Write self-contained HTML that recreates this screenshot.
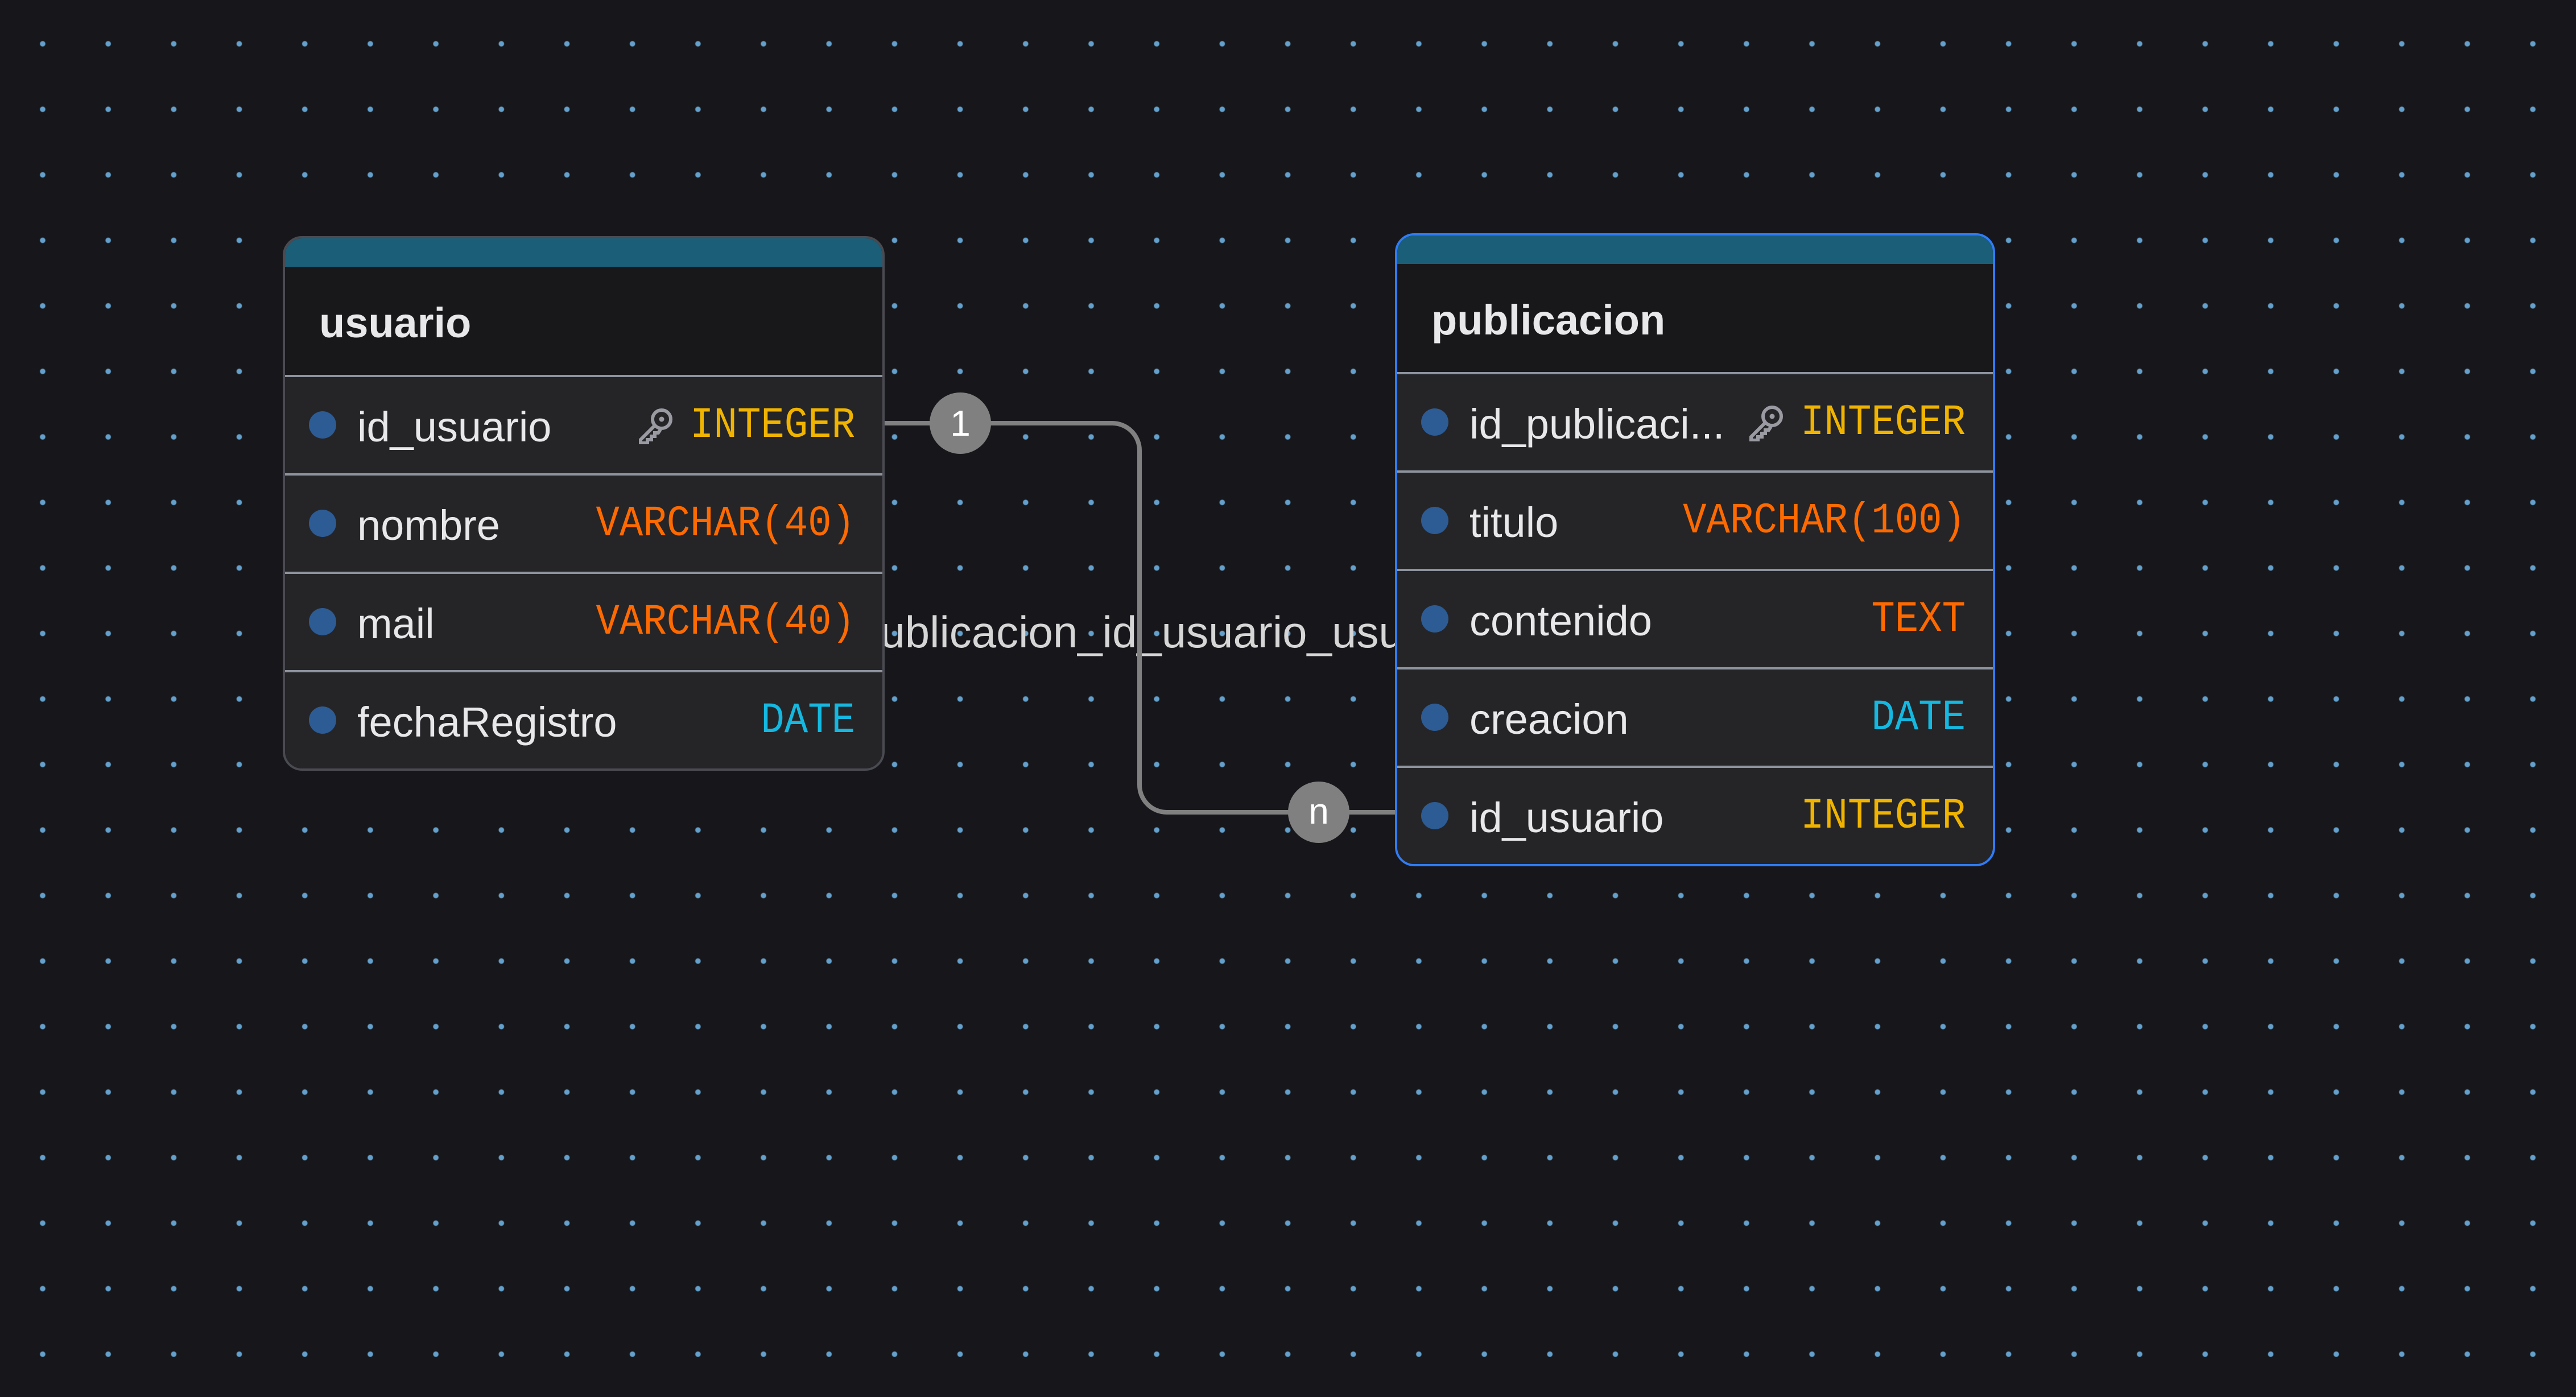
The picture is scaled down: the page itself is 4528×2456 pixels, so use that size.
<!DOCTYPE html>
<html><head><meta charset="utf-8"><style>
*{margin:0;padding:0;box-sizing:border-box}
html,body{width:4528px;height:2456px;overflow:hidden}
body{background-color:#17171b;background-image:radial-gradient(circle at 57.6px 57.6px,#64a0cc 0,#64a0cc 4px,rgba(100,160,204,0) 5.5px);background-size:115.2px 115.2px;background-position:17.4px 19.4px;font-family:"Liberation Sans",sans-serif;position:relative}
.t{position:absolute;border:4px solid #4a4a52;border-radius:34px;overflow:hidden;background:#252528}
.t.sel{border-color:#2f7cf6}
.hb{height:50px;background:#1a5e78}
.ti{height:190px;background:#18181b;color:#e8e8ea;font-weight:bold;font-size:74px;line-height:198px;padding-left:60px}
.r{height:173px;border-top:4px solid #8e949e;position:relative;background:#252528}
.dot{position:absolute;left:42px;top:60px;width:48px;height:48px;border-radius:50%;background:#2d5b94}
.n{position:absolute;left:127px;top:5px;line-height:166px;font-size:74px;color:#e8e8ea}
.ty{position:absolute;right:48px;top:2px;line-height:166px;font-family:"Liberation Mono",monospace;font-size:69px;transform:scaleY(1.1);transform-origin:right center}
.k{position:absolute;right:368px;top:54px;width:60px;height:64px}
.y{color:#f0b400}.o{color:#ff6a00}.c{color:#14b8e0}
.lbl{position:absolute;left:1504px;top:1066px;font-size:78px;color:#d6d6d6;white-space:nowrap}
</style></head><body>
<div class="lbl">publicacion_id_usuario_usuario</div>
<svg style="position:absolute;left:0;top:0" width="4528" height="2456">
<path d="M1551 744 H1955 A48 48 0 0 1 2003 792 V1380 A48 48 0 0 0 2051 1428 H2455" fill="none" stroke="#808080" stroke-width="8"/>
<circle cx="1688" cy="744" r="54" fill="#808080"/>
<text x="1688" y="766" font-family="Liberation Sans" font-size="64" fill="#fff" text-anchor="middle">1</text>
<circle cx="2318" cy="1428" r="54" fill="#808080"/>
<text x="2318" y="1448" font-family="Liberation Sans" font-size="64" fill="#fff" text-anchor="middle">n</text>
</svg>

<div class="t" style="left:497px;top:415px;width:1058px;height:940px">
<div class="hb"></div>
<div class="ti">usuario</div>
<div class="r"><div class="dot"></div><div class="n">id_usuario</div>
<svg class="k" viewBox="0 0 60 64"><circle cx="40" cy="20" r="16" fill="none" stroke="#9a9aa2" stroke-width="6"/><circle cx="40" cy="20" r="4.5" fill="#9a9aa2"/><path d="M28 31 L3 56 V62 H15 V56 H22 V50 H28 V44 H34 L38 38" fill="none" stroke="#9a9aa2" stroke-width="6" stroke-linejoin="miter"/></svg>
<div class="ty y">INTEGER</div></div>
<div class="r"><div class="dot"></div><div class="n">nombre</div><div class="ty o">VARCHAR(40)</div></div>
<div class="r"><div class="dot"></div><div class="n">mail</div><div class="ty o">VARCHAR(40)</div></div>
<div class="r"><div class="dot"></div><div class="n">fechaRegistro</div><div class="ty c">DATE</div></div>
</div>

<div class="t sel" style="left:2452px;top:410px;width:1055px;height:1113px">
<div class="hb"></div>
<div class="ti">publicacion</div>
<div class="r"><div class="dot"></div><div class="n">id_publicaci...</div>
<svg class="k" viewBox="0 0 60 64"><circle cx="40" cy="20" r="16" fill="none" stroke="#9a9aa2" stroke-width="6"/><circle cx="40" cy="20" r="4.5" fill="#9a9aa2"/><path d="M28 31 L3 56 V62 H15 V56 H22 V50 H28 V44 H34 L38 38" fill="none" stroke="#9a9aa2" stroke-width="6" stroke-linejoin="miter"/></svg>
<div class="ty y">INTEGER</div></div>
<div class="r"><div class="dot"></div><div class="n">titulo</div><div class="ty o">VARCHAR(100)</div></div>
<div class="r"><div class="dot"></div><div class="n">contenido</div><div class="ty o">TEXT</div></div>
<div class="r"><div class="dot"></div><div class="n">creacion</div><div class="ty c">DATE</div></div>
<div class="r"><div class="dot"></div><div class="n">id_usuario</div><div class="ty y">INTEGER</div></div>
</div>
</body></html>
